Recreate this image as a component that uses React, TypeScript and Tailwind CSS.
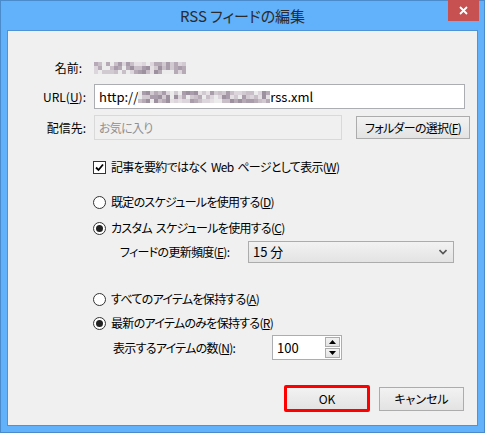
import React from 'react';

const font = "[font-family:'Noto_Sans_CJK_JP','Noto_Sans',sans-serif] [font-feature-settings:'palt']";

const Check: React.FC = () => (
    <div className="w-[13px] h-[13px] border border-[#333] bg-white flex items-center justify-center">
        <svg width="9" height="9" viewBox="0 0 9 9">
            <path d="M1 4.5 L3.5 7 L8 1.5" fill="none" stroke="#000" strokeWidth="1.8" />
        </svg>
    </div>
);

const Radio: React.FC<{ on?: boolean }> = ({ on }) => (
    <div className="w-[13px] h-[13px] rounded-full border border-[#333] bg-white flex items-center justify-center">
        {on && <div className="w-[7px] h-[7px] rounded-full bg-[#222]" />}
    </div>
);

const Sp: React.FC = () => <span className="inline-block w-[4px]" />;

// pixelated mosaic standing in for the censored part of the picture
const Mosaic: React.FC<{ cols: number; seed: number }> = ({ cols, seed }) => {
    const shades = ['#ececec', '#dcd6dc', '#c9bfc8', '#b5aab6', '#9d909f', '#e4e0e4', '#d2cad1', '#a99cab'];
    const rows = [0, 1, 2];
    return (
        <div aria-hidden className="flex flex-col">
            {rows.map(r => (
                <div key={r} className="flex">
                    {Array.from({ length: cols }).map((_, c) => {
                        const v = Math.abs(Math.sin((c + 1) * 12.9898 + (r + seed) * 78.233) * 43758.5453) % 1;
                        return <div key={c} className="w-[4px] h-[4px]" style={{ background: shades[Math.floor(v * shades.length)] }} />;
                    })}
                </div>
            ))}
        </div>
    );
};

export default function App() {
    const btn = "bg-gradient-to-b from-[#f2f2f2] to-[#e3e3e3] border border-[#acacac] flex items-center justify-center text-[12px] text-black";

    return (
        <div className={`w-[485px] h-[433px] bg-[#62b1fb] border border-[#4b8bcc] flex flex-col ${font}`}>
            {/* title bar */}
            <div className="relative h-[29px] flex items-center justify-center pt-[2px] shrink-0">
                <span className="text-[15px] text-[#2b2b2b]">RSS フィードの編集</span>
                <div className="absolute top-[-1px] right-[5px] w-[31px] h-[21px] bg-[#c75050] flex items-center justify-center">
                    <svg width="9" height="9" viewBox="0 0 9 9">
                        <path d="M1 1 L8 8 M8 1 L1 8" stroke="#fff" strokeWidth="1.8" />
                    </svg>
                </div>
            </div>

            {/* client */}
            <div className="mx-[6px] h-[396px] border border-[#4f93d6] bg-[#f0f0f0] flex flex-col text-[12px] text-black tracking-[-0.7px]">
                {/* 名前 */}
                <div className="mt-[24px] h-[25px] flex items-center">
                    <div className="w-[86px] text-right pr-[12px] tracking-normal">名前:</div>
                    <Mosaic cols={23} seed={3} />
                </div>

                {/* URL */}
                <div className="mt-[4px] h-[25px] flex items-center">
                    <div className="w-[86px] text-right pr-[8px] tracking-normal">URL(<u>U</u>):</div>
                    <div className="w-[371px] h-[25px] border border-[#abadb3] bg-white flex items-center pl-[4px] text-[13px] whitespace-nowrap tracking-normal">
                        <span>http://</span>
                        <Mosaic cols={33} seed={7} />
                        <span>rss.xml</span>
                    </div>
                </div>

                {/* 配信先 */}
                <div className="mt-[6px] h-[25px] flex items-center">
                    <div className="w-[86px] text-right pr-[8px] tracking-normal">配信先:</div>
                    <div className="w-[248px] h-[25px] border border-[#d9d9d9] bg-[#f0f0f0] flex items-center pl-[4px] text-[#8f8f8f]">お気に入り</div>
                    <div className={`${btn} ml-[14px] w-[114px] h-[23px]`}>フォルダーの選択(<u>F</u>)</div>
                </div>

                {/* checkbox */}
                <div className="mt-[17px] h-[20px] flex items-center pl-[85px] gap-[5px]">
                    <Check />
                    <span>記事を要約ではなく<Sp />Web<Sp />ページとして表示(<u>W</u>)</span>
                </div>

                {/* schedule */}
                <div className="mt-[15px] h-[20px] flex items-center pl-[85px] gap-[5px]">
                    <Radio />
                    <span>既定のスケジュールを使用する(<u>D</u>)</span>
                </div>
                <div className="mt-[6px] h-[20px] flex items-center pl-[85px] gap-[5px]">
                    <Radio on />
                    <span>カスタム<Sp />スケジュールを使用する(<u>C</u>)</span>
                </div>
                <div className="mt-[3px] h-[22px] flex items-center pl-[112px]">
                    <div className="w-[128px]">フィードの更新頻度(<u>E</u>):</div>
                    <div className="w-[206px] h-[22px] bg-gradient-to-b from-[#f2f2f2] to-[#e3e3e3] border border-[#acacac] flex items-center justify-between pl-[4px] pr-[6px] text-[13px] tracking-normal">
                        <span>15 分</span>
                        <svg width="8" height="6" viewBox="0 0 8 6">
                            <path d="M0.5 1 L4 4.5 L7.5 1" fill="none" stroke="#555" strokeWidth="1.6" />
                        </svg>
                    </div>
                </div>

                {/* items */}
                <div className="mt-[26px] h-[20px] flex items-center pl-[85px] gap-[5px]">
                    <Radio />
                    <span>すべてのアイテムを保持する(<u>A</u>)</span>
                </div>
                <div className="mt-[4px] h-[20px] flex items-center pl-[85px] gap-[5px]">
                    <Radio on />
                    <span>最新のアイテムのみを保持する(<u>R</u>)</span>
                </div>
                <div className="mt-[2px] h-[25px] flex items-center pl-[105px]">
                    <div className="w-[159px]">表示するアイテムの数(<u>N</u>):</div>
                    <div className="w-[70px] h-[25px] border border-[#abadb3] bg-white flex items-center justify-between pl-[4px] pr-[1px] text-[13px] tracking-normal">
                        <span>100</span>
                        <div className="flex flex-col gap-[1px]">
                            <div className="w-[15px] h-[10px] border border-[#acacac] bg-gradient-to-b from-[#f2f2f2] to-[#e3e3e3] flex items-center justify-center">
                                <svg width="7" height="4" viewBox="0 0 7 4"><path d="M0 4 L3.5 0 L7 4 Z" fill="#000" /></svg>
                            </div>
                            <div className="w-[15px] h-[10px] border border-[#acacac] bg-gradient-to-b from-[#f2f2f2] to-[#e3e3e3] flex items-center justify-center">
                                <svg width="7" height="4" viewBox="0 0 7 4"><path d="M0 0 L3.5 4 L7 0 Z" fill="#000" /></svg>
                            </div>
                        </div>
                    </div>
                </div>

                {/* buttons */}
                <div className="mt-[25px] flex items-center justify-end pr-[13px] gap-[9px] tracking-normal">
                    <div className="w-[86px] h-[27px] border-[3px] border-[#ff0000] rounded-[2px] bg-gradient-to-b from-[#f2f2f2] to-[#e3e3e3] flex items-center justify-center text-[12px]">OK</div>
                    <div className={`${btn} w-[85px] h-[24px]`}>キャンセル</div>
                </div>
            </div>
        </div>
    );
}
